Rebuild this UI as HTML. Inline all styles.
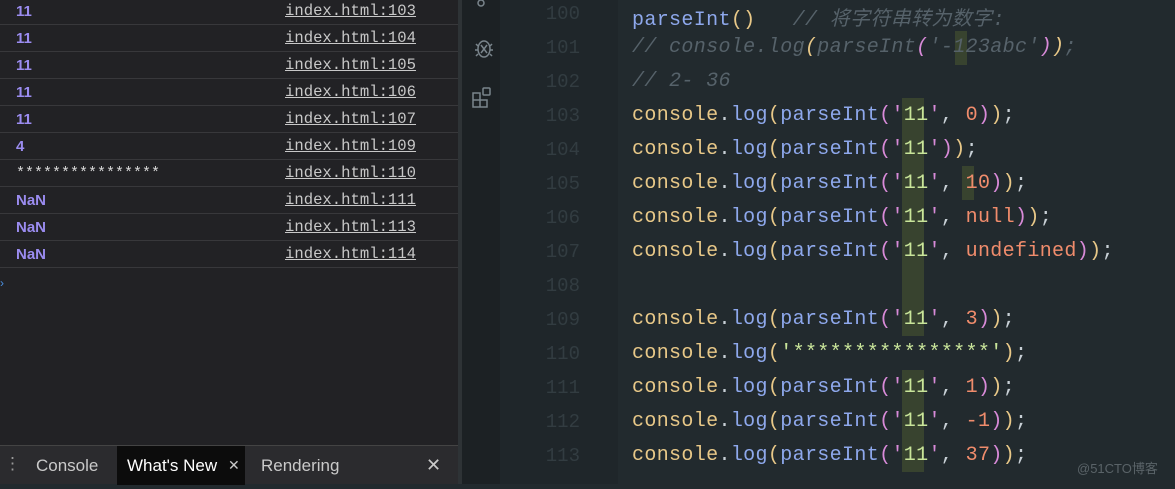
<!DOCTYPE html>
<html><head><meta charset="utf-8"><style>
*{margin:0;padding:0;box-sizing:border-box}
body{width:1175px;height:484px;overflow:hidden;background:#222a2e;position:relative;font-family:"Liberation Sans",sans-serif}
#con{position:absolute;left:0;top:0;width:458px;height:484px;background:#222225}
.row{position:absolute;left:0;width:458px;height:27px;border-bottom:1px solid #38383b;font-family:"Liberation Mono",monospace;font-size:15.6px}
.row .v{position:absolute;left:16px;top:5px;color:#9b8cf0;font-family:"Liberation Sans",sans-serif;font-weight:bold;font-size:15px}
.row .s{color:#d8d8d8;font-weight:normal;font-family:"Liberation Mono",monospace}
.row .l{position:absolute;left:285px;top:4px;color:#c8c8c8;text-decoration:underline}
#tabs{position:absolute;left:0;top:445px;width:458px;height:39px;background:#2b2b2e;border-top:1px solid #444;color:#c9c9c9;font-size:17px}
#tabs span{position:absolute;top:10px}
#div{position:absolute;left:458px;top:0;width:4px;height:484px;background:#2e3336}
#act{position:absolute;left:462px;top:0;width:38px;height:484px;background:#1c2124}
#gut{position:absolute;left:500px;top:0;width:118px;height:484px;background:#1f262a}
.ln{position:absolute;left:500px;width:80px;text-align:right;color:#323c41;font-family:"Liberation Mono",monospace;font-size:19px}
.cd{position:absolute;left:632px;font-family:"Liberation Mono",monospace;font-size:20px;letter-spacing:0.35px;white-space:pre;color:#c8d0d6}
.y{color:#e8c888}.b{color:#8ea8ec}.p{color:#d88ad8}.g{color:#c9e59a}.o{color:#f08c6c}.c{color:#56626a;font-style:italic}.w{color:#bcc5cc}
.hl{position:absolute;background:#38432f;width:22px;height:34px}
</style></head><body>
<div id="con">
<div class="row" style="top:-2px"><span class="v">11</span><span class="l">index.html:103</span></div>
<div class="row" style="top:25px"><span class="v">11</span><span class="l">index.html:104</span></div>
<div class="row" style="top:52px"><span class="v">11</span><span class="l">index.html:105</span></div>
<div class="row" style="top:79px"><span class="v">11</span><span class="l">index.html:106</span></div>
<div class="row" style="top:106px"><span class="v">11</span><span class="l">index.html:107</span></div>
<div class="row" style="top:133px"><span class="v">4</span><span class="l">index.html:109</span></div>
<div class="row" style="top:160px"><span class="v s">****************</span><span class="l">index.html:110</span></div>
<div class="row" style="top:187px"><span class="v">NaN</span><span class="l">index.html:111</span></div>
<div class="row" style="top:214px"><span class="v">NaN</span><span class="l">index.html:113</span></div>
<div class="row" style="top:241px"><span class="v">NaN</span><span class="l">index.html:114</span></div>
<div style="position:absolute;left:0;top:276px;color:#4a8fe0;font-size:12px">›</div>
<div id="tabs">
<span style="left:4px;top:8px;color:#999">⋮</span>
<span style="left:36px">Console</span>
<div style="position:absolute;left:117px;top:0;width:128px;height:39px;background:#0c0c0c"></div>
<span style="left:127px;color:#fff">What's New</span><span style="left:228px;font-size:14px;top:11px">✕</span>
<span style="left:261px">Rendering</span>
<span style="left:426px;font-size:18px;top:9px">✕</span>
</div>
</div>
<div id="div"></div>
<div id="act">
<svg width="38" height="484" fill="none" stroke="#7a858c" stroke-width="1.5">
<circle cx="19" cy="3" r="3"/>
<ellipse cx="22" cy="49" rx="6" ry="8"/><path d="M19 45l6 8M25 45l-6 8M14 44l2 2M30 44l-2 2M13 50h3M28 50h3M14 56l2-2M30 56l-2-2"/>
<path d="M11 93h7v7h-7zM11 100h7v7h-7zM18 100h7v7h-7z"/><rect x="21" y="88" width="7" height="7" rx="1"/>
</svg>
</div>
<div id="gut"></div>
<div class="hl" style="left:955px;top:31px;width:12px"></div>
<div class="hl" style="left:902px;top:98px;height:205px"></div>
<div class="hl" style="left:902px;top:302px;height:34px"></div>
<div class="hl" style="left:902px;top:370px;height:102px"></div>
<div class="hl" style="left:962px;top:166px;width:12px"></div>
<div class="ln" style="top:3px">100</div>
<div class="ln" style="top:37px">101</div>
<div class="ln" style="top:71px">102</div>
<div class="ln" style="top:105px">103</div>
<div class="ln" style="top:139px">104</div>
<div class="ln" style="top:173px">105</div>
<div class="ln" style="top:207px">106</div>
<div class="ln" style="top:241px">107</div>
<div class="ln" style="top:275px">108</div>
<div class="ln" style="top:309px">109</div>
<div class="ln" style="top:343px">110</div>
<div class="ln" style="top:377px">111</div>
<div class="ln" style="top:411px">112</div>
<div class="ln" style="top:445px">113</div>
<div class="cd" style="top:2px"><span class="b">parseInt</span><span class="y">()</span>   <span class="c">// 将字符串转为数字:</span></div>
<div class="cd" style="top:36px"><span class="c">// console.log<span class="y">(</span>parseInt<span class="p">(</span>'-123abc'<span class="p">)</span><span class="y">)</span>;</span></div>
<div class="cd" style="top:70px"><span class="c">// 2- 36</span></div>
<div class="cd" style="top:104px"><span class="y">console</span>.<span class="b">log</span><span class="y">(</span><span class="b">parseInt</span><span class="p">(</span><span class="p">'</span><span class="g">11</span><span class="p">'</span>, <span class="o">0</span><span class="p">)</span><span class="y">)</span>;</div>
<div class="cd" style="top:138px"><span class="y">console</span>.<span class="b">log</span><span class="y">(</span><span class="b">parseInt</span><span class="p">(</span><span class="p">'</span><span class="g">11</span><span class="p">'</span><span class="p">)</span><span class="y">)</span>;</div>
<div class="cd" style="top:172px"><span class="y">console</span>.<span class="b">log</span><span class="y">(</span><span class="b">parseInt</span><span class="p">(</span><span class="p">'</span><span class="g">11</span><span class="p">'</span>, <span class="o">10</span><span class="p">)</span><span class="y">)</span>;</div>
<div class="cd" style="top:206px"><span class="y">console</span>.<span class="b">log</span><span class="y">(</span><span class="b">parseInt</span><span class="p">(</span><span class="p">'</span><span class="g">11</span><span class="p">'</span>, <span class="o">null</span><span class="p">)</span><span class="y">)</span>;</div>
<div class="cd" style="top:240px"><span class="y">console</span>.<span class="b">log</span><span class="y">(</span><span class="b">parseInt</span><span class="p">(</span><span class="p">'</span><span class="g">11</span><span class="p">'</span>, <span class="o">undefined</span><span class="p">)</span><span class="y">)</span>;</div>
<div class="cd" style="top:308px"><span class="y">console</span>.<span class="b">log</span><span class="y">(</span><span class="b">parseInt</span><span class="p">(</span><span class="p">'</span><span class="g">11</span><span class="p">'</span>, <span class="o">3</span><span class="p">)</span><span class="y">)</span>;</div>
<div class="cd" style="top:342px"><span class="y">console</span>.<span class="b">log</span><span class="y">(</span><span class="g">'****************'</span><span class="y">)</span>;</div>
<div class="cd" style="top:376px"><span class="y">console</span>.<span class="b">log</span><span class="y">(</span><span class="b">parseInt</span><span class="p">(</span><span class="p">'</span><span class="g">11</span><span class="p">'</span>, <span class="o">1</span><span class="p">)</span><span class="y">)</span>;</div>
<div class="cd" style="top:410px"><span class="y">console</span>.<span class="b">log</span><span class="y">(</span><span class="b">parseInt</span><span class="p">(</span><span class="p">'</span><span class="g">11</span><span class="p">'</span>, <span class="o">-1</span><span class="p">)</span><span class="y">)</span>;</div>
<div class="cd" style="top:444px"><span class="y">console</span>.<span class="b">log</span><span class="y">(</span><span class="b">parseInt</span><span class="p">(</span><span class="p">'</span><span class="g">11</span><span class="p">'</span>, <span class="o">37</span><span class="p">)</span><span class="y">)</span>;</div>
<div style="position:absolute;left:1077px;top:458px;color:#5a6368;font-size:13px;font-family:'Liberation Sans','Noto Sans CJK SC',sans-serif">@51CTO博客</div>
</body></html>
